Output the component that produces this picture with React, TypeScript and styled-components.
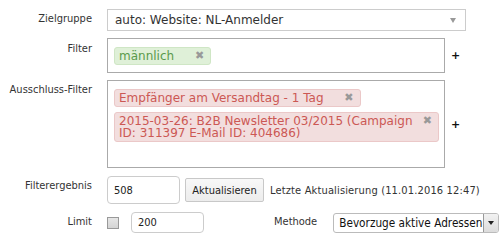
import React from "react";
import styled, { createGlobalStyle } from "styled-components";

const Global = createGlobalStyle`
  html, body { margin: 0; padding: 0; background: #fff; }
  body { font-family: "DejaVu Sans", Verdana, sans-serif; color: #333; }
`;

const Form = styled.div`
  display: grid;
  grid-template-columns: 92px 1fr;
  column-gap: 15px;
  row-gap: 7px;
  padding-top: 9px;
  width: 500px;
`;

const Label = styled.div<{ $top?: number }>`
  font-family: "DejaVu Sans Condensed", "DejaVu Sans", sans-serif;
  font-size: 11px;
  line-height: 12px;
  color: #333;
  text-align: right;
  padding-top: ${(p) => p.$top ?? 4}px;
  white-space: nowrap;
`;

const Field = styled.div`
  display: flex;
  align-items: center;
  min-width: 0;
`;

const Select = styled.div`
  box-sizing: border-box;
  width: 359px;
  height: 22px;
  border: 1px solid #ccc;
  background: #fff;
  display: flex;
  align-items: center;
  justify-content: space-between;
  padding: 0 8px 0 7px;
  font-size: 12px;
  color: #333;
`;

const Caret = styled.span`
  width: 0;
  height: 0;
  border-left: 3.5px solid transparent;
  border-right: 3.5px solid transparent;
  border-top: 5px solid #999;
  margin-right: 1px;
`;

const TagBox = styled.div<{ $h: number }>`
  box-sizing: border-box;
  width: 338px;
  height: ${(p) => p.$h}px;
  border: 1px solid #aaa;
  background: #fff;
  padding: 8px 5px 0 6px;
  display: flex;
  flex-direction: column;
  align-items: flex-start;
  gap: 5px;
`;

const Plus = styled.span`
  font-family: "DejaVu Sans", sans-serif;
  font-weight: bold;
  font-size: 11px;
  color: #111;
  margin-left: 6px;
  line-height: 1;
`;

const Tag = styled.div<{ $tone: "ok" | "bad" }>`
  position: relative;
  box-sizing: border-box;
  max-width: 100%;
  border: 1px solid ${(p) => (p.$tone === "ok" ? "#cfe6c5" : "#ebc8c8")};
  background: ${(p) => (p.$tone === "ok" ? "#dff0d8" : "#f2dede")};
  color: ${(p) => (p.$tone === "ok" ? "#5a9a4c" : "#cc5854")};
  border-radius: 3px;
  font-size: 12px;
  line-height: 12px;
  padding: 2px 24px 2px 4px;
`;

const TagText = styled.span`
  padding-right: 12px;
`;

const Remove = styled.span`
  position: absolute;
  right: 6px;
  top: 2px;
  font-size: 11px;
  line-height: 11px;
  font-weight: bold;
  color: #999;
`;

const Row = styled.div<{ $gap?: number }>`
  display: flex;
  align-items: center;
  gap: ${(p) => p.$gap ?? 5}px;
  margin-top: 1px;
`;

const Input = styled.div<{ $w: number; $h: number }>`
  box-sizing: border-box;
  width: ${(p) => p.$w}px;
  height: ${(p) => p.$h}px;
  border: 1px solid #ccc;
  border-radius: 4px;
  background: #fff;
  display: flex;
  align-items: center;
  padding-left: 6px;
  font-family: "DejaVu Sans Condensed", "DejaVu Sans", sans-serif;
  font-size: 11px;
  color: #222;
`;

const Button = styled.div`
  box-sizing: border-box;
  height: 24px;
  width: 79px;
  border: 1px solid #c8c8c8;
  border-radius: 2px;
  background: linear-gradient(#f8f8f8, #ececec);
  display: flex;
  align-items: center;
  justify-content: center;
  font-family: "DejaVu Sans Condensed", "DejaVu Sans", sans-serif;
  font-size: 11px;
  color: #222;
`;

const Note = styled.span`
  font-family: "DejaVu Sans Condensed", "DejaVu Sans", sans-serif;
  font-size: 11px;
  letter-spacing: 0.15px;
  color: #333;
  margin-left: 1px;
`;

const Check = styled.span`
  box-sizing: border-box;
  width: 12px;
  height: 12px;
  border: 1px solid #999;
  background: linear-gradient(#e6e6e6, #d4d4d4);
  margin-right: 12px;
`;

const MethodLabel = styled.span`
  font-family: "DejaVu Sans Condensed", "DejaVu Sans", sans-serif;
  font-size: 11px;
  color: #333;
  margin-left: 70px;
  margin-right: 16px;
  align-self: flex-start;
  padding-top: 3px;
`;

const NativeSelect = styled.div`
  box-sizing: border-box;
  width: 166px;
  height: 20px;
  border: 1px solid #bbb;
  border-radius: 3px;
  background: #fff;
  display: flex;
  align-items: center;
  padding-left: 5px;
  font-family: "DejaVu Sans Condensed", "DejaVu Sans", sans-serif;
  font-size: 11.7px;
  color: #111;
  overflow: hidden;
  white-space: nowrap;
`;

const SelText = styled.span`
  flex: 1;
  overflow: hidden;
`;

const ArrowBtn = styled.span`
  width: 14px;
  height: 18px;
  border-left: 1px solid #999;
  background: linear-gradient(#f2f2f2, #dcdcdc);
  display: flex;
  align-items: center;
  justify-content: center;
  &::after {
    content: "";
    border-left: 3px solid transparent;
    border-right: 3px solid transparent;
    border-top: 4px solid #222;
  }
`;

export default function App() {
  return (
    <>
      <Global />
      <Form>
        <Label>Zielgruppe</Label>
        <Field>
          <Select>
            <span>auto: Website: NL-Anmelder</span>
            <Caret />
          </Select>
        </Field>

        <Label $top={5}>Filter</Label>
        <Field>
          <TagBox $h={35}>
            <Tag $tone="ok">
              <TagText>männlich</TagText>
              <Remove>✖</Remove>
            </Tag>
          </TagBox>
          <Plus>+</Plus>
        </Field>

        <Label $top={4}>Ausschluss-Filter</Label>
        <Field>
          <TagBox $h={88}>
            <Tag $tone="bad">
              <TagText>Empfänger am Versandtag - 1 Tag</TagText>
              <Remove>✖</Remove>
            </Tag>
            <Tag $tone="bad">
              <TagText>
                2015-03-26: B2B Newsletter 03/2015 (Campaign ID: 311397 E-Mail ID: 404686)
              </TagText>
              <Remove>✖</Remove>
            </Tag>
          </TagBox>
          <Plus>+</Plus>
        </Field>

        <Label $top={5}>Filterergebnis</Label>
        <Row>
          <Input $w={73} $h={28}>508</Input>
          <Button>Aktualisieren</Button>
          <Note>Letzte Aktualisierung (11.01.2016 12:47)</Note>
        </Row>

        <Label $top={5}>Limit</Label>
        <Row $gap={0}>
          <Check />
          <Input $w={73} $h={21}>200</Input>
          <MethodLabel>Methode</MethodLabel>
          <NativeSelect>
            <SelText>Bevorzuge aktive Adressen</SelText>
            <ArrowBtn />
          </NativeSelect>
        </Row>
      </Form>
    </>
  );
}
